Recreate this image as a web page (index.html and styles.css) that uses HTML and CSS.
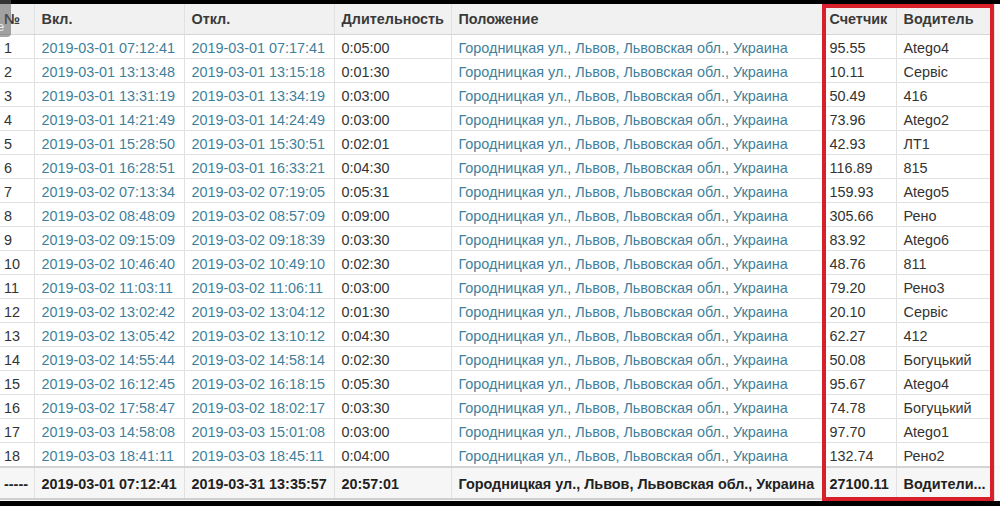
FILE: index.html
```html
<!DOCTYPE html>
<html lang="ru">
<head>
    <meta charset="UTF-8">
    <title>Стоянки</title>
    <link rel="stylesheet" href="styles.css">
</head>
<body>

<div class="screen">
    <div class="report">
        <table class="trips">
            <colgroup>
                <col class="c-num">
                <col class="c-date">
                <col class="c-date">
                <col class="c-dur">
                <col class="c-place">
                <col class="c-meter">
                <col class="c-driver">
            </colgroup>
            <tr>
                <th>№</th>
                <th>Вкл.</th>
                <th>Откл.</th>
                <th>Длительность</th>
                <th>Положение</th>
                <th>Счетчик</th>
                <th>Водитель</th>
            </tr>
            <tr><td>1</td><td class="link">2019-03-01 07:12:41</td><td class="link">2019-03-01 07:17:41</td><td>0:05:00</td><td class="link">Городницкая ул., Львов, Львовская обл., Украина</td><td>95.55</td><td>Atego4</td></tr>
            <tr><td>2</td><td class="link">2019-03-01 13:13:48</td><td class="link">2019-03-01 13:15:18</td><td>0:01:30</td><td class="link">Городницкая ул., Львов, Львовская обл., Украина</td><td>10.11</td><td>Сервіс</td></tr>
            <tr><td>3</td><td class="link">2019-03-01 13:31:19</td><td class="link">2019-03-01 13:34:19</td><td>0:03:00</td><td class="link">Городницкая ул., Львов, Львовская обл., Украина</td><td>50.49</td><td>416</td></tr>
            <tr><td>4</td><td class="link">2019-03-01 14:21:49</td><td class="link">2019-03-01 14:24:49</td><td>0:03:00</td><td class="link">Городницкая ул., Львов, Львовская обл., Украина</td><td>73.96</td><td>Atego2</td></tr>
            <tr><td>5</td><td class="link">2019-03-01 15:28:50</td><td class="link">2019-03-01 15:30:51</td><td>0:02:01</td><td class="link">Городницкая ул., Львов, Львовская обл., Украина</td><td>42.93</td><td>ЛТ1</td></tr>
            <tr><td>6</td><td class="link">2019-03-01 16:28:51</td><td class="link">2019-03-01 16:33:21</td><td>0:04:30</td><td class="link">Городницкая ул., Львов, Львовская обл., Украина</td><td>116.89</td><td>815</td></tr>
            <tr><td>7</td><td class="link">2019-03-02 07:13:34</td><td class="link">2019-03-02 07:19:05</td><td>0:05:31</td><td class="link">Городницкая ул., Львов, Львовская обл., Украина</td><td>159.93</td><td>Atego5</td></tr>
            <tr><td>8</td><td class="link">2019-03-02 08:48:09</td><td class="link">2019-03-02 08:57:09</td><td>0:09:00</td><td class="link">Городницкая ул., Львов, Львовская обл., Украина</td><td>305.66</td><td>Рено</td></tr>
            <tr><td>9</td><td class="link">2019-03-02 09:15:09</td><td class="link">2019-03-02 09:18:39</td><td>0:03:30</td><td class="link">Городницкая ул., Львов, Львовская обл., Украина</td><td>83.92</td><td>Atego6</td></tr>
            <tr><td>10</td><td class="link">2019-03-02 10:46:40</td><td class="link">2019-03-02 10:49:10</td><td>0:02:30</td><td class="link">Городницкая ул., Львов, Львовская обл., Украина</td><td>48.76</td><td>811</td></tr>
            <tr><td>11</td><td class="link">2019-03-02 11:03:11</td><td class="link">2019-03-02 11:06:11</td><td>0:03:00</td><td class="link">Городницкая ул., Львов, Львовская обл., Украина</td><td>79.20</td><td>Рено3</td></tr>
            <tr><td>12</td><td class="link">2019-03-02 13:02:42</td><td class="link">2019-03-02 13:04:12</td><td>0:01:30</td><td class="link">Городницкая ул., Львов, Львовская обл., Украина</td><td>20.10</td><td>Сервіс</td></tr>
            <tr><td>13</td><td class="link">2019-03-02 13:05:42</td><td class="link">2019-03-02 13:10:12</td><td>0:04:30</td><td class="link">Городницкая ул., Львов, Львовская обл., Украина</td><td>62.27</td><td>412</td></tr>
            <tr><td>14</td><td class="link">2019-03-02 14:55:44</td><td class="link">2019-03-02 14:58:14</td><td>0:02:30</td><td class="link">Городницкая ул., Львов, Львовская обл., Украина</td><td>50.08</td><td>Богуцький</td></tr>
            <tr><td>15</td><td class="link">2019-03-02 16:12:45</td><td class="link">2019-03-02 16:18:15</td><td>0:05:30</td><td class="link">Городницкая ул., Львов, Львовская обл., Украина</td><td>95.67</td><td>Atego4</td></tr>
            <tr><td>16</td><td class="link">2019-03-02 17:58:47</td><td class="link">2019-03-02 18:02:17</td><td>0:03:30</td><td class="link">Городницкая ул., Львов, Львовская обл., Украина</td><td>74.78</td><td>Богуцький</td></tr>
            <tr><td>17</td><td class="link">2019-03-03 14:58:08</td><td class="link">2019-03-03 15:01:08</td><td>0:03:00</td><td class="link">Городницкая ул., Львов, Львовская обл., Украина</td><td>97.70</td><td>Atego1</td></tr>
            <tr><td>18</td><td class="link">2019-03-03 18:41:11</td><td class="link">2019-03-03 18:45:11</td><td>0:04:00</td><td class="link">Городницкая ул., Львов, Львовская обл., Украина</td><td>132.74</td><td>Рено2</td></tr>
            <tr class="total">
                <td>-----</td>
                <td>2019-03-01 07:12:41</td>
                <td>2019-03-31 13:35:57</td>
                <td>20:57:01</td>
                <td>Городницкая ул., Львов, Львовская обл., Украина</td>
                <td>27100.11</td>
                <td>Водители...</td>
            </tr>
        </table>
    </div>

    <!-- рамка выделения колонок -->
    <div class="highlight"></div>

    <div class="side-tab"><span>e</span></div>
</div>

</body>
</html>
```

FILE: styles.css
```css
body {
    margin: 0;
    padding: 0;
    background-color: #000;
    font-family: "Liberation Sans", Arial, sans-serif;
}

.screen {
    position: relative;
    width: 1000px;
    height: 506px;
    padding: 4px 0 5px;
    box-sizing: border-box;
}

.report {
    height: 497px;
    background-color: #fafafa;
    overflow: hidden;
}

.trips {
    width: 994px;
    table-layout: fixed;
    border-collapse: collapse;
    font-size: 14.4px;
    color: #333;
    background-color: #fff;
}

.c-num { width: 34px; }
.c-date { width: 150px; }
.c-dur { width: 117px; }
.c-place { width: 371px; }
.c-meter { width: 74px; }
.c-driver { width: 98px; }

th, td {
    padding: 0 0 0 7px;
    text-align: left;
    white-space: nowrap;
    overflow: hidden;
    border: 1px solid #e1e1e1;
}

th:first-child, td:first-child {
    padding-left: 4px;
    border-left: none;
}

th {
    height: 30px;
    font-weight: bold;
    color: #3a3a3a;
    background-color: #f1f1f1;
    border-top: none;
    border-bottom: 1px solid #d6d6d6;
}

td {
    height: 21px;
    padding-top: 2px;
}

td.link {
    color: #3f7f9b;
}

.total td {
    height: 28px;
    font-weight: bold;
    color: #222;
    background-color: #f6f6f6;
    border-top: 2px solid #d4d4d4;
    border-bottom: 2px solid #cfcfcf;
}

.highlight {
    position: absolute;
    left: 822px;
    top: 4px;
    width: 172px;
    height: 497px;
    border: 4px solid #d8202b;
    box-sizing: border-box;
    pointer-events: none;
}

.side-tab {
    position: absolute;
    left: 0;
    top: 0;
    width: 11px;
    height: 37px;
    background-color: rgba(95, 95, 95, 0.55);
    border-bottom-right-radius: 4px;
    overflow: hidden;
}

.side-tab span {
    position: absolute;
    left: -3px;
    top: 19px;
    font-size: 13px;
    color: #eee;
}
```
